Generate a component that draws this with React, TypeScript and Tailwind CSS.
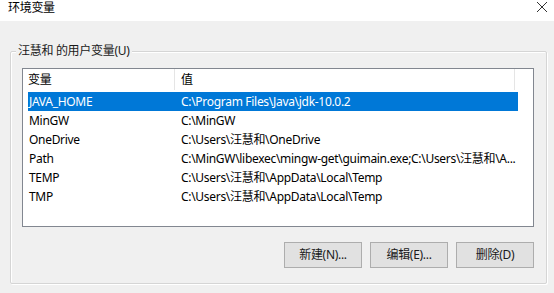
const rows = [
  { name: "JAVA_HOME", value: "C:\\Program Files\\Java\\jdk-10.0.2", selected: true },
  { name: "MinGW", value: "C:\\MinGW" },
  { name: "OneDrive", value: "C:\\Users\\汪慧和\\OneDrive" },
  { name: "Path", value: "C:\\MinGW\\libexec\\mingw-get\\guimain.exe;C:\\Users\\汪慧和\\A..." },
  { name: "TEMP", value: "C:\\Users\\汪慧和\\AppData\\Local\\Temp" },
  { name: "TMP", value: "C:\\Users\\汪慧和\\AppData\\Local\\Temp" },
];

const buttons = ["新建(N)...", "编辑(E)...", "删除(D)"];

export default function App() {
  return (
    <div className="w-[554px] h-[293px] overflow-hidden bg-[#f0f0f0] text-[12px] leading-[16px] tracking-[-0.3px] text-black font-['Noto_Sans','Noto_Sans_CJK_SC',sans-serif]">
      {/* Title bar */}
      <div className="h-[21px] bg-white flex items-start justify-between pl-[8px] pr-[6px]">
        <span>环境变量</span>
        <svg width="12" height="12" viewBox="0 0 12 12" className="mt-[1px]">
          <path d="M1 1 L11 11 M11 1 L1 11" stroke="#333" strokeWidth="1" fill="none" />
        </svg>
      </div>

      {/* Group box */}
      <fieldset className="ml-[10px] mt-[22px] w-[537px] border border-[#d5d5d5] rounded-[2px] shadow-[inset_1px_1px_0_#ffffff,1px_1px_0_#ffffff] pb-[15px]">
        <legend className="ml-[5px] px-[2px] bg-[#f0f0f0] text-[#1a1a1a]">汪慧和 的用户变量(U)</legend>

        {/* List view */}
        <div className="ml-[11px] mt-[9px] w-[512px] h-[159px] bg-white border border-[#828790] overflow-hidden">
          <div className="flex h-[21px] items-center">
            <div className="w-[152px] h-full flex items-center pl-[5px] border-r border-[#e5e5e5]">变量</div>
            <div className="w-[340px] h-full flex items-center pl-[6px] border-r border-[#e5e5e5]">值</div>
          </div>
          <div className="mt-[2px] ml-[5px] w-[490px]">
            {rows.map((r) => (
              <div
                key={r.name}
                className={`flex h-[19px] items-center ${r.selected ? "bg-[#0078d7] text-white" : ""}`}
              >
                <div className="w-[153px] pl-[1px] whitespace-nowrap">{r.name}</div>
                <div className="flex-1 whitespace-nowrap">{r.value}</div>
              </div>
            ))}
          </div>
        </div>

        {/* Buttons */}
        <div className="mt-[15px] w-[523px] flex justify-end gap-[8px]">
          {buttons.map((b) => (
            <button
              key={b}
              className="w-[78px] h-[26px] bg-[#e1e1e1] border border-[#adadad] flex items-center justify-center text-[#1a1a1a]"
            >
              {b}
            </button>
          ))}
        </div>
      </fieldset>
    </div>
  );
}
